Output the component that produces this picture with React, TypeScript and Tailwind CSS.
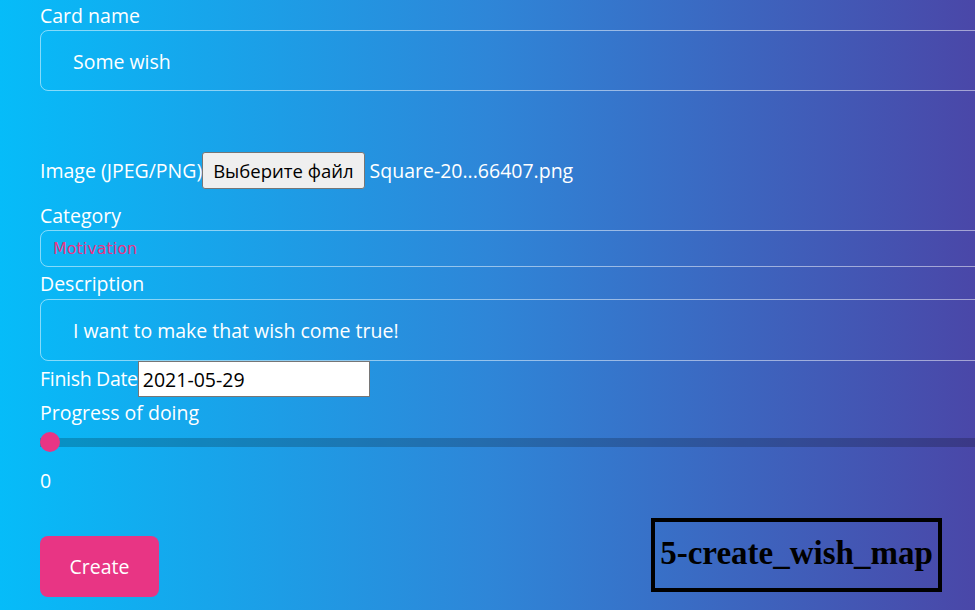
const font = { fontFamily: '"Open Sans", "Noto Sans", sans-serif' }

const App = () => {
  return (
    <div
      className="relative h-[610px] w-[975px] overflow-hidden bg-[linear-gradient(to_right,#06bcf9,#2e86d8_50%,#4a47a8)] text-[19.5px] text-white"
      style={font}
    >
      <div className="flex w-[1100px] flex-col pl-10 pt-[3px]">
        <label className="leading-[26px]">Card name</label>
        <div className="mt-px flex h-[61px] items-center rounded-lg border border-white/50 pb-[-1px] pl-8 pt-[2px]">
          Some wish
        </div>

        <div className="mt-[61px] flex h-[37px] items-center">
          <span>Image (JPEG/PNG)</span>
          <button className="h-[37px] rounded-[3px] border border-[#767676] bg-[#efefef] px-[10px] text-[18.5px] text-black">
            Выберите файл
          </button>
          <span className="ml-[5px]">Square-20...66407.png</span>
        </div>

        <label className="mt-[14px] leading-[26px]">Category</label>
        <div
          className="mt-px flex h-[37px] items-center rounded-lg border border-white/50 pl-3 text-[16px] text-[#e83584]"
          style={{ fontFamily: '"DejaVu Sans", sans-serif' }}
        >
          Motivation
        </div>

        <label className="mt-[4px] leading-[26px]">Description</label>
        <div className="mt-[2px] flex h-[62px] items-center rounded-lg border border-white/50 pl-8 pt-[2px]">
          I want to make that wish come true!
        </div>

        <div className="flex h-[36px] items-center">
          <span className="tracking-[-0.3px]">Finish Date</span>
          <input
            type="text"
            readOnly
            value="2021-05-29"
            className="h-[36px] w-[232px] border border-[#767676] bg-white px-1 text-[19.5px] text-black outline-none"
          />
        </div>

        <label className="mt-[3px] leading-[26px]">Progress of doing</label>
        <div className="relative mt-[6px] h-[20px]">
          <div className="absolute left-0 right-0 top-[6px] h-[9px] bg-black/20" />
          <div className="absolute left-0 top-0 h-[20px] w-[20px] rounded-full bg-[#e83584]" />
        </div>

        <span className="mt-[16px] leading-[26px]">0</span>

        <button className="mt-[42px] h-[61px] w-[119px] rounded-lg bg-[#e83584] text-white">
          Create
        </button>
      </div>

      <div className="absolute left-[651px] top-[518px] flex h-[74px] w-[291px] items-center justify-center border-4 border-black pb-[4px]">
        <span
          className="text-[33px] font-bold leading-none text-black"
          style={{ fontFamily: '"Liberation Serif", serif' }}
        >
          5-create_wish_map
        </span>
      </div>
    </div>
  )
}

export default App
